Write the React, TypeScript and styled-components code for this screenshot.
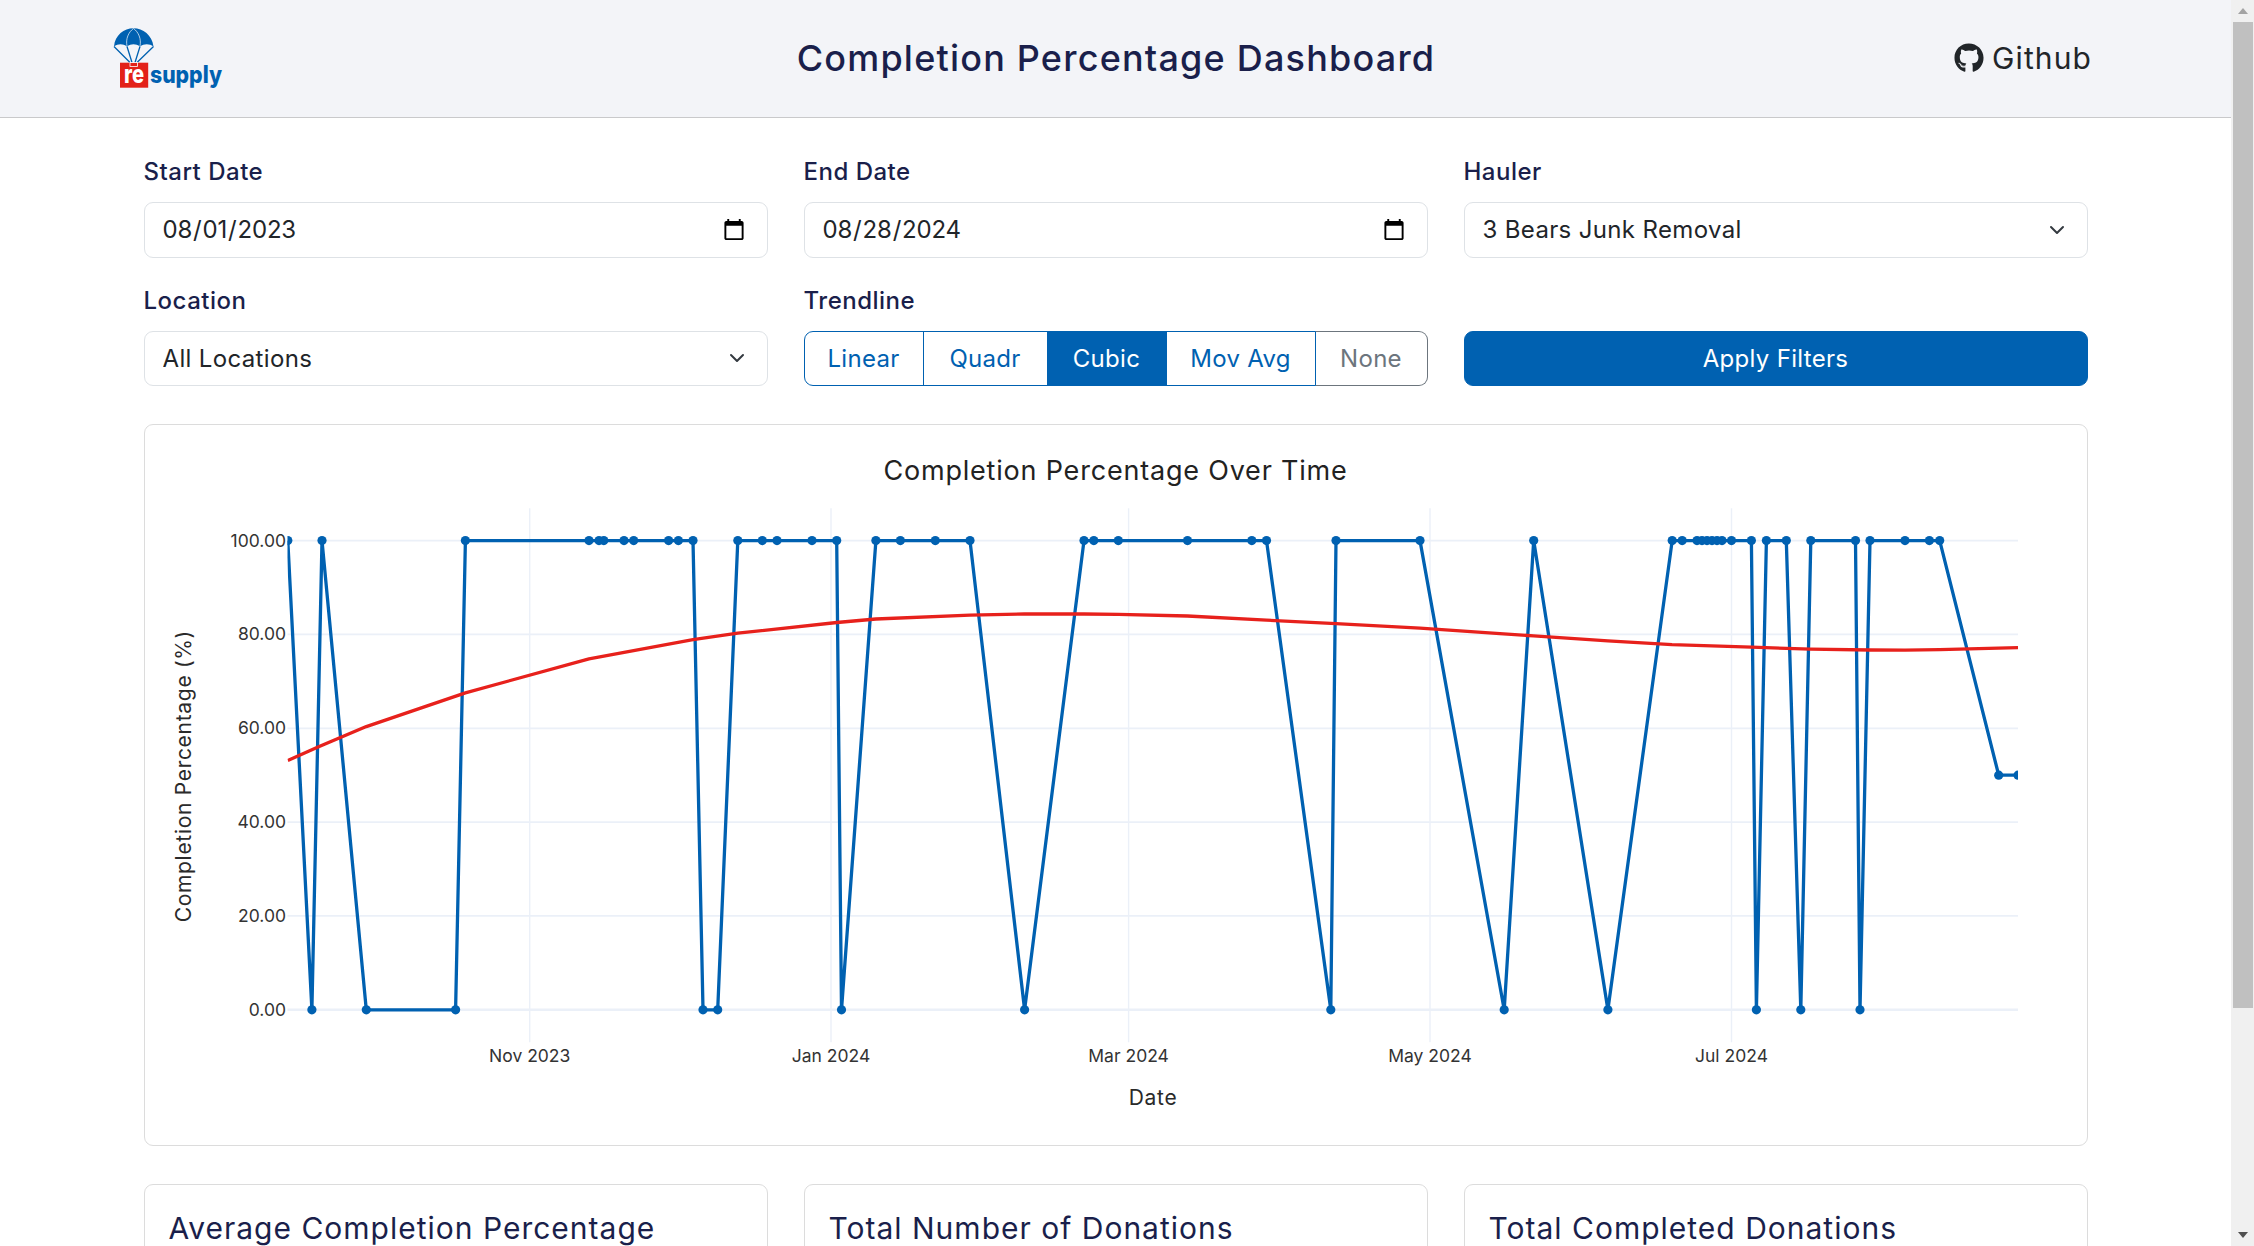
import React from 'react'
import styled, { createGlobalStyle } from 'styled-components'
import { FaGithub } from 'react-icons/fa'

const BLUE = '#0061b1'
const NAVY = '#1a1f4b'

const chevron =
  "data:image/svg+xml,%3csvg xmlns='http://www.w3.org/2000/svg' viewBox='0 0 16 16'%3e%3cpath fill='none' stroke='%23343a40' stroke-linecap='round' stroke-linejoin='round' stroke-width='2' d='m2 5 6 6 6-6'/%3e%3c/svg%3e"

// x pixel, y value: picked off the plot, the viewBox of the chart is in page pixels
const series: [number, number][] = [
  [287.8, 100], [311.9, 0], [322, 100], [366.3, 0], [455.6, 0], [465.4, 100],
  [589, 100], [599, 100], [603.8, 100], [624, 100], [633.7, 100], [668.6, 100],
  [678.4, 100], [693, 100], [703, 0], [717.7, 0], [737.8, 100], [762.3, 100],
  [777, 100], [812, 100], [836.7, 100], [841.5, 0], [875.9, 100], [900.4, 100],
  [935.3, 100], [970, 100], [1024.6, 0], [1084, 100], [1093.8, 100], [1118.3, 100],
  [1187.5, 100], [1251.8, 100], [1266.5, 100], [1330.8, 0], [1336, 100], [1420, 100],
  [1504.2, 0], [1533.7, 100], [1607.9, 0], [1672.2, 100], [1682.2, 100], [1697, 100],
  [1702, 100], [1707, 100], [1712, 100], [1717, 100], [1722, 100], [1731.5, 100],
  [1751.4, 100], [1756.4, 0], [1766.4, 100], [1786.3, 100], [1800.8, 0], [1810.8, 100],
  [1855.5, 100], [1860, 0], [1870, 100], [1905, 100], [1929.4, 100], [1939.7, 100],
  [1998.7, 50], [2018, 50],
]

const trend: [number, number][] = [
  [287.8, 759.4], [318.6, 745.6], [366.3, 725.4], [465.4, 691.7], [589, 657.6],
  [693, 638.5], [737.8, 632], [836.9, 621.3], [875.9, 617.8], [970, 614],
  [1024.6, 612.8], [1084, 612.8], [1118.3, 613.2], [1187.5, 614.8], [1266.5, 619],
  [1336, 622.4], [1420, 627], [1500, 632.4], [1533.7, 634.7], [1607.9, 639.6],
  [1672, 643.5], [1751.4, 646], [1810.8, 648], [1870, 648.8], [1905, 649],
  [1939.7, 648.4], [2018, 646.5],
]

const PLOT = { left: 287.5, right: 2018, top: 507, bottom: 1041, y0: 1008.6, y100: 539.4 }
const yPos = (v: number) => PLOT.y0 - ((PLOT.y0 - PLOT.y100) * v) / 100

const yTicks = [0, 20, 40, 60, 80, 100]
const xTicks = [
  { x: 529.7, label: 'Nov 2023' },
  { x: 831, label: 'Jan 2024' },
  { x: 1128.6, label: 'Mar 2024' },
  { x: 1430, label: 'May 2024' },
  { x: 1731.5, label: 'Jul 2024' },
]

const trendOptions = [
  { label: 'Linear' },
  { label: 'Quadr' },
  { label: 'Cubic', active: true },
  { label: 'Mov Avg' },
  { label: 'None', muted: true },
]

const Logo = () => (
  <LogoSvg viewBox="0 3 130 80" width="130" height="80">
    <path
      d="M14 31.5C15 20 24 13.3 33.5 13.3S52 20 53.5 31.5C49.5 28.5 44 28.5 40 31.5C36 28.5 31 28.5 27 31.5C23 28.5 18 28.5 14 31.5Z"
      fill={BLUE}
    />
    <path d="M33.5 13.5C28.5 17 25.5 24 27 31M33.5 13.5C38.5 17 41.5 24 40 31" fill="none" stroke="#dbe8f4" strokeWidth="0.8" />
    <path
      d="M14 31.5L30 47.5M53.5 31.5L37 47.5M27 31.5L32 47.5M40 31.5L35 47.5"
      fill="none"
      stroke={BLUE}
      strokeWidth="1.3"
    />
    <rect x="20" y="47.7" width="28.2" height="25" fill="#e32119" />
    <rect x="30" y="47.5" width="7.5" height="4" fill="none" stroke="#fff" strokeWidth="0.8" />
    <text x="24" y="67.7" fill="#fff" fontSize="25" fontWeight="800" textLength="20" lengthAdjust="spacingAndGlyphs">
      re
    </text>
    <text x="50" y="68" fill={BLUE} fontSize="24" fontWeight="800" textLength="72" lengthAdjust="spacingAndGlyphs">
      supply
    </text>
  </LogoSvg>
)

const Chart = () => (
  <ChartSvg viewBox="145 423.8 1942 720.5">
    <defs>
      <clipPath id="plot-area">
        <rect
          x={PLOT.left}
          y={PLOT.top}
          width={PLOT.right - PLOT.left}
          height={PLOT.bottom - PLOT.top}
        />
      </clipPath>
    </defs>
    <ChartTitle x="1115.5" y="479">
      Completion Percentage Over Time
    </ChartTitle>

    {xTicks.map((t) => (
      <line key={t.x} x1={t.x} x2={t.x} y1={PLOT.top} y2={PLOT.bottom} stroke="#ebf0f8" strokeWidth="1.4" />
    ))}
    {yTicks.map((v) => (
      <line
        key={v}
        x1={PLOT.left}
        x2={PLOT.right}
        y1={yPos(v)}
        y2={yPos(v)}
        stroke="#ebf0f8"
        strokeWidth={v === 0 ? 2.6 : 1.8}
      />
    ))}

    <g clipPath="url(#plot-area)">
      <polyline
        points={series.map(([x, v]) => `${x},${yPos(v)}`).join(' ')}
        fill="none"
        stroke={BLUE}
        strokeWidth="3.3"
        strokeLinejoin="round"
      />
      {series.map(([x, v]) => (
        <circle key={x} cx={x} cy={yPos(v)} r="4.6" fill={BLUE} />
      ))}
      <polyline
        points={trend.map(([x, y]) => `${x},${y}`).join(' ')}
        fill="none"
        stroke="#e7211c"
        strokeWidth="3.3"
        strokeLinejoin="round"
      />
    </g>

    {yTicks.map((v) => (
      <TickLabel key={v} x="286" y={yPos(v) + 6} textAnchor="end">
        {v.toFixed(2)}
      </TickLabel>
    ))}
    {xTicks.map((t) => (
      <TickLabel key={t.x} x={t.x} y="1061" textAnchor="middle">
        {t.label}
      </TickLabel>
    ))}
    <AxisLabel x="1153" y="1103.5" textAnchor="middle">
      Date
    </AxisLabel>
    <AxisLabel x="0" y="0" textAnchor="middle" transform="translate(191 775) rotate(-90)">
      Completion Percentage (%)
    </AxisLabel>
  </ChartSvg>
)

export default function App() {
  return (
    <>
      <GlobalStyle />
      <Shell>
        <Main>
          <Header>
            <Logo />
            <Title>Completion Percentage Dashboard</Title>
            <GithubLink href="#">
              <FaGithub size={30} />
              Github
            </GithubLink>
          </Header>
          <Content>
            <Filters>
              <Field>
                <Label>Start Date</Label>
                <Control type="date" defaultValue="2023-08-01" />
              </Field>
              <Field>
                <Label>End Date</Label>
                <Control type="date" defaultValue="2024-08-28" />
              </Field>
              <Field>
                <Label>Hauler</Label>
                <Dropdown defaultValue="3 Bears Junk Removal">
                  <option>3 Bears Junk Removal</option>
                </Dropdown>
              </Field>
              <Field>
                <Label>Location</Label>
                <Dropdown defaultValue="All Locations">
                  <option>All Locations</option>
                </Dropdown>
              </Field>
              <Field>
                <Label>Trendline</Label>
                <TrendGroup>
                  {trendOptions.map((o) => (
                    <TrendButton key={o.label} $active={o.active} $muted={o.muted}>
                      {o.label}
                    </TrendButton>
                  ))}
                </TrendGroup>
              </Field>
              <ApplyButton>Apply Filters</ApplyButton>
            </Filters>
            <ChartCard>
              <Chart />
            </ChartCard>
            <Stats>
              <StatCard>
                <StatTitle>Average Completion Percentage</StatTitle>
              </StatCard>
              <StatCard>
                <StatTitle>Total Number of Donations</StatTitle>
              </StatCard>
              <StatCard>
                <StatTitle>Total Completed Donations</StatTitle>
              </StatCard>
            </Stats>
          </Content>
        </Main>
        <ScrollRail>
          <ScrollButton>
            <ArrowUp />
          </ScrollButton>
          <ScrollThumb />
          <ScrollButton $bottom>
            <ArrowDown />
          </ScrollButton>
        </ScrollRail>
      </Shell>
    </>
  )
}

const GlobalStyle = createGlobalStyle`
  * {
    box-sizing: border-box;
  }
  html,
  body {
    margin: 0;
    height: 100%;
    overflow: hidden;
    background: #fff;
  }
  body {
    font-family: Inter, "Noto Sans", sans-serif;
    color: #212529;
  }
`

const Shell = styled.div`
  display: flex;
  height: 100vh;
`

const Main = styled.main`
  flex: 1;
  min-width: 0;
  overflow: hidden;
`

const Header = styled.header`
  display: grid;
  grid-template-columns: 1fr auto 1fr;
  align-items: center;
  height: 118px;
  padding: 0 139px 2px 140px;
  background: #f3f4f8;
  border-bottom: 1px solid #c9c9cb;
`

const LogoSvg = styled.svg`
  margin-left: -40px;
  overflow: visible;
  font-family: Inter, sans-serif;
`

const Title = styled.h1`
  margin: 0;
  font-size: 36px;
  font-weight: 500;
  letter-spacing: 1.2px;
  color: ${NAVY};
`

const GithubLink = styled.a`
  justify-self: end;
  display: flex;
  align-items: center;
  gap: 8px;
  font-size: 30px;
  letter-spacing: 1.1px;
  color: #212529;
  text-decoration: none;
`

const Content = styled.div`
  display: flex;
  flex-direction: column;
  gap: 37.5px;
  width: 1944px;
  margin: 0 auto;
  padding-top: 36px;
`

const Filters = styled.section`
  display: grid;
  grid-template-columns: repeat(3, 1fr);
  gap: 25px 36px;
`

const Field = styled.div`
  display: flex;
  flex-direction: column;
  gap: 12px;
`

const Label = styled.label`
  font-size: 24px;
  line-height: 36px;
  font-weight: 500;
  letter-spacing: 0.5px;
  color: ${NAVY};
`

const Control = styled.input`
  height: 55.5px;
  padding: 0 19px 0 17px;
  font: inherit;
  font-size: 24px;
  letter-spacing: -0.2px;
  color: #212529;
  background: #fff;
  border: 1px solid #dee2e6;
  border-radius: 9px;
  outline: none;
`

const Dropdown = styled.select`
  height: 55.5px;
  padding: 0 54px 0 18px;
  font: inherit;
  font-size: 24px;
  letter-spacing: 0.35px;
  color: #212529;
  appearance: none;
  background: #fff url("${chevron}") no-repeat right 19px center / 22px 16px;
  border: 1px solid #dee2e6;
  border-radius: 9px;
  outline: none;
`

const TrendGroup = styled.div`
  display: grid;
  grid-template-columns: 120fr 124fr 119fr 149fr 112fr;
  height: 55.5px;
`

const TrendButton = styled.button<{ $active?: boolean; $muted?: boolean }>`
  padding: 0;
  margin-left: -1px;
  font: inherit;
  font-size: 24px;
  letter-spacing: 0.3px;
  color: ${(p) => (p.$active ? '#fff' : p.$muted ? '#6c757d' : BLUE)};
  background: ${(p) => (p.$active ? BLUE : '#fff')};
  border: 1px solid ${(p) => (p.$muted ? '#6c757d' : BLUE)};

  &:first-child {
    margin-left: 0;
    border-radius: 9px 0 0 9px;
  }
  &:last-child {
    border-radius: 0 9px 9px 0;
    border-left-color: ${BLUE};
  }
`

const ApplyButton = styled.button`
  align-self: end;
  height: 55.5px;
  font: inherit;
  font-size: 24px;
  letter-spacing: 0.3px;
  color: #fff;
  background: ${BLUE};
  border: 1px solid ${BLUE};
  border-radius: 9px;
`

const ChartCard = styled.section`
  height: 722.5px;
  background: #fff;
  border: 1px solid #dcdcdc;
  border-radius: 9px;
  overflow: hidden;
`

const ChartSvg = styled.svg`
  display: block;
  width: 100%;
  height: 100%;
  font-family: Inter, sans-serif;
`

const ChartTitle = styled.text`
  font-size: 27px;
  letter-spacing: 0.8px;
  fill: #222;
  text-anchor: middle;
`

const TickLabel = styled.text`
  font-size: 17.5px;
  fill: #333;
`

const AxisLabel = styled.text`
  font-size: 21px;
  letter-spacing: 0.7px;
  fill: #2a2a2a;
`

const Stats = styled.section`
  display: grid;
  grid-template-columns: repeat(3, 1fr);
  gap: 36px;
`

const StatCard = styled.article`
  min-height: 240px;
  padding: 21px 24px;
  background: #fff;
  border: 1px solid #dcdcdc;
  border-radius: 9px;
`

const StatTitle = styled.h2`
  margin: 0;
  font-size: 30px;
  line-height: 44px;
  font-weight: 400;
  letter-spacing: 1px;
  color: ${NAVY};
`

const ScrollRail = styled.aside`
  display: flex;
  flex-direction: column;
  flex: none;
  width: 23px;
  background: #f0f0f0;
`

const ScrollButton = styled.div<{ $bottom?: boolean }>`
  display: flex;
  justify-content: center;
  align-items: center;
  height: 22px;
  margin-top: ${(p) => (p.$bottom ? 'auto' : '0')};
`

const ArrowUp = styled.span`
  border-left: 5px solid transparent;
  border-right: 5px solid transparent;
  border-bottom: 6px solid #a3a3a3;
`

const ArrowDown = styled.span`
  border-left: 5px solid transparent;
  border-right: 5px solid transparent;
  border-top: 6px solid #505050;
`

const ScrollThumb = styled.div`
  height: 986px;
  margin: 0 1px 0 2px;
  background: #c0c0c0;
`
